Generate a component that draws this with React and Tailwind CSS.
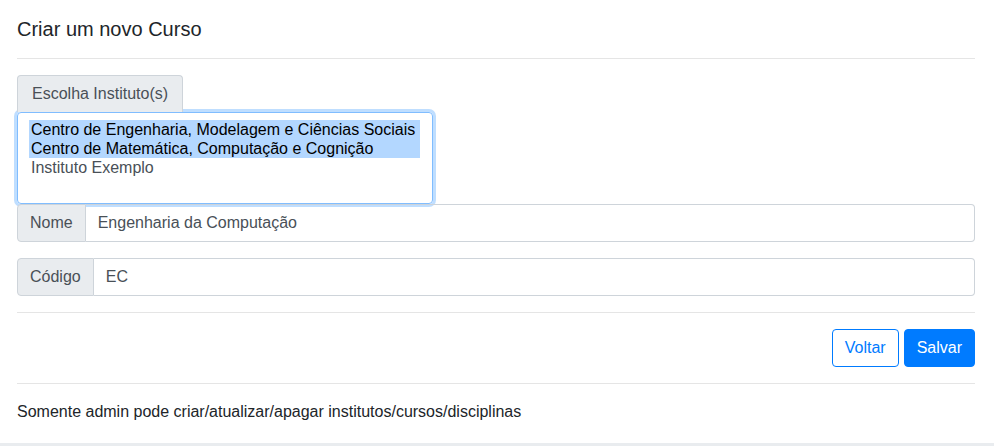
export default function App() {
  const institutos = [
    { name: "Centro de Engenharia, Modelagem e Ciências Sociais", selected: true },
    { name: "Centro de Matemática, Computação e Cognição", selected: true },
    { name: "Instituto Exemplo", selected: false },
  ];

  return (
    <div className="w-[994px] h-[446px] bg-[#e9ecef] text-[#212529]" style={{ fontFamily: '"Liberation Sans", Arial, sans-serif' }}>
      <div className="h-[443px] bg-white pl-[17px] pr-[19px] flex flex-col">
        {/* Header */}
        <div className="h-[59px] border-b border-[#e5e5e5] flex items-center pb-[1px]">
          <h5 className="text-[20px] leading-[30px]">Criar um novo Curso</h5>
        </div>

        {/* Body */}
        <div className="pt-4 pb-4 border-b border-[#e5e5e5]">
          <div className="inline-block h-[37px] px-[14px] leading-[36px] text-[16px] text-[#495057] bg-[#e9ecef] border border-b-0 border-[#ced4da] rounded-t">
            Escolha Instituto(s)
          </div>
          <div className="w-[416px] h-[92px] border border-[#80bdff] rounded shadow-[0_0_0_3px_rgba(0,123,255,0.25)] pt-[7px] px-[12px] text-[16px] leading-[19px]">
            {institutos.map((i) => (
              <div
                key={i.name}
                className={i.selected ? "inline-block bg-[#b3d7ff] text-black pl-[2px] pr-[3px] -ml-[1px] w-[391px]" : "block text-[#495057] pl-[2px] -ml-[1px]"}
              >
                {i.name}
              </div>
            ))}
          </div>

          <div className="flex h-[38px] text-[16px]">
            <span className="px-3 flex items-center bg-[#e9ecef] text-[#495057] border border-[#ced4da] rounded-l">Nome</span>
            <input
              readOnly
              value="Engenharia da Computação"
              className="flex-1 px-3 border border-l-0 border-[#ced4da] rounded-r text-[#495057] outline-none"
            />
          </div>

          <div className="mt-4 flex h-[38px] text-[16px]">
            <span className="px-3 flex items-center bg-[#e9ecef] text-[#495057] border border-[#ced4da] rounded-l">Código</span>
            <input
              readOnly
              value="EC"
              className="flex-1 px-3 border border-l-0 border-[#ced4da] rounded-r text-[#495057] outline-none"
            />
          </div>
        </div>

        {/* Footer */}
        <div className="py-4 flex justify-end gap-[5px] border-b border-[#e5e5e5]">
          <button className="h-[38px] px-3 text-[16px] text-[#007bff] border border-[#007bff] rounded bg-white">Voltar</button>
          <button className="h-[38px] px-3 text-[16px] text-white bg-[#007bff] border border-[#007bff] rounded">Salvar</button>
        </div>

        <p className="pt-[16px] text-[16px] leading-[24px]">Somente admin pode criar/atualizar/apagar institutos/cursos/disciplinas</p>
      </div>
    </div>
  );
}
